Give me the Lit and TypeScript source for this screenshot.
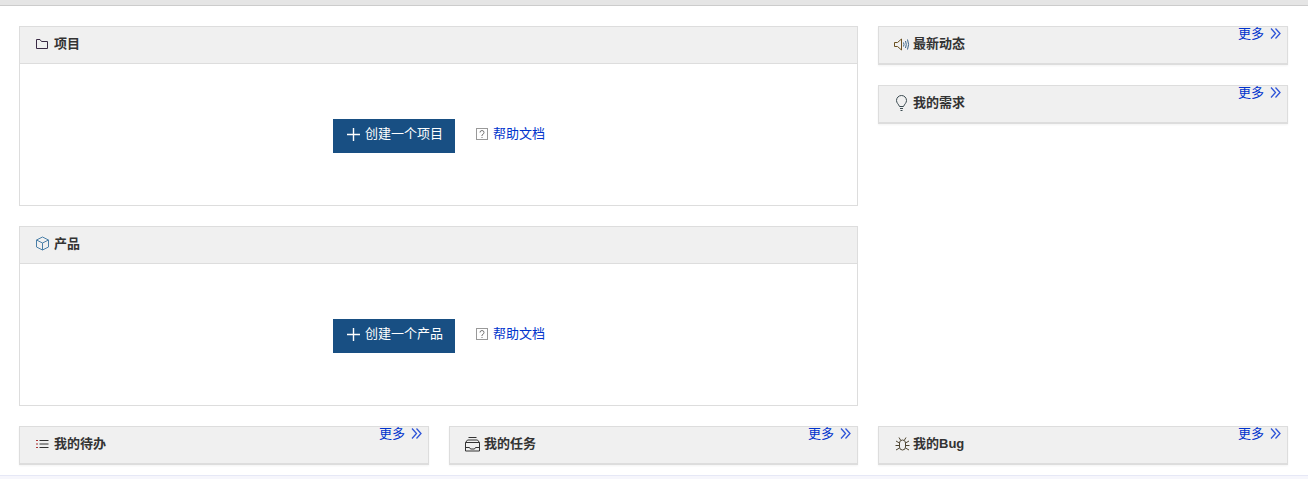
import { LitElement, html, css, svg } from "lit";
import { customElement } from "lit/decorators.js";

const ic = (w: number, h: number, body: unknown, cls = "ic") =>
  html`<svg class=${cls} width=${w} height=${h} viewBox="0 0 ${w} ${h}" fill="none" stroke="currentColor" stroke-width="1">${body}</svg>`;

const folder = ic(13, 12, svg`<path d="M1.500 10.500V1.500h3.500l1.500 2h6v7z" stroke="#3a2a45"/>`);
const box = ic(15, 15, svg`<path d="M7.500 1 13.500 4v7l-6 3-6-3V4zM1.500 4l6 3 6-3M7.500 7v7" stroke="#4a7fa8"/>`);
const speaker = ic(16, 13, svg`<path d="M.5 4.500h3l4-3.500v11l-4-3.500h-3z" stroke="#6a5020"/><path d="M9.500 4.500q1 2 0 4M11.500 3q1.600 3.500 0 7M13.500 1.500q2.200 5 0 10" stroke="#3a6488"/>`);
const bulb = ic(14, 16, svg`<path d="M5.500 11.500C4.500 9 2.500 8 2.500 5.500a5 5 0 0 1 10 0c0 2.500-2 3.500-3 6zM6 13.500h3M6.500 15.500h2" stroke="#3a4a50"/>`);
const list = ic(14, 10, svg`<path d="M4.500 1.500h9M4.500 5h9M4.500 8.500h9" stroke="#333"/><path d="M1 1.500h2M1 5h2M1 8.500h2" stroke="#a33"/>`);
const inbox = ic(15, 15, svg`<path d="M3.500.5h8M2.500 3h10M.5 5.500h14v8.500H.5zM.5 10.500h4l1 1.500h4l1-1.500h4M.5 5.500 2.500 3M14.500 5.500 12.500 3" stroke="#333"/>`);
const bug = ic(16, 14, svg`<path d="M5.500 6q0-3 3-3t3 3v4q0 3-3 3t-3-3zM6.500 3 5 .5M10.500 3 12 .5M5.500 6 2 4M11.500 6 15 4M5.500 8.500h-4M11.500 8.500h4M5.500 11 2 13M11.500 11l3.500 2" stroke="#4f4632"/>`);
const chevrons = ic(11, 11, svg`<path d="M1 .5 5.500 5.500 1 10.500M5.500 .5 10 5.500 5.500 10.500" stroke="#2f55d8" stroke-width="1.300"/>`, "chev");
const plus = ic(13, 13, svg`<path d="M6.500 0v13M0 6.500h13" stroke="#fff" stroke-width="1.400"/>`);
const help = ic(12, 12, svg`<rect x=".5" y=".5" width="11" height="11" stroke="#999"/><path d="M4 4.500q0-2 2-2t2 2q0 1.500-2 2.500v1M6 9v1" stroke="#777"/>`);

const heading = css`
  .icon { width: 19px; flex: none; display: flex; align-items: center; margin-bottom: 3px; }
  .title { margin-bottom: 6px; }
`;

@customElement("mini-panel")
export class MiniPanel extends LitElement {
  static properties = { heading: {} };
  heading = "";
  static styles = [heading, css`
    :host { display: block; min-width: 0; }
    .panel {
      position: relative; height: 39px; box-sizing: border-box;
      display: flex; align-items: center; padding: 1px 0 0 15px;
      background: #f0f0f0; border: 1px solid #ddd; border-bottom-width: 2px;
      box-shadow: 0 1px 2px rgba(0, 0, 0, 0.05);
      color: #333; font: bold 13px "Liberation Sans", "Noto Sans CJK SC", sans-serif;
    }
    .more {
      position: absolute; top: -2px; right: 6px; display: flex; align-items: center; gap: 6px;
      color: #0033cc; font: 13px/15px "Noto Sans CJK SC", sans-serif;
    }
    .more span { margin-bottom: 2px; }
  `];
  render() {
    return html`<div class="panel"><span class="icon"><slot></slot></span><span class="title">${this.heading}</span>
      <span class="more"><span>更多</span>${chevrons}</span></div>`;
  }
}

@customElement("block-panel")
export class BlockPanel extends LitElement {
  static properties = { heading: {}, action: {} };
  heading = "";
  action = "";
  static styles = [heading, css`
    :host { display: block; }
    .panel { height: 180px; box-sizing: border-box; border: 1px solid #ddd; background: #fff; }
    .head {
      height: 37px; box-sizing: border-box; display: flex; align-items: center;
      padding: 0 0 0 15px; background: #f0f0f0; border-bottom: 1px solid #ddd;
      color: #333; font: bold 13px "Noto Sans CJK SC", sans-serif;
    }
    .body { display: flex; align-items: center; padding: 55px 0 0 313px; }
    .btn {
      width: 122px; height: 34px; box-sizing: border-box; display: flex; align-items: center;
      gap: 5px; padding-left: 14px; background: #184f83; color: #fff;
      font: 13px "Noto Sans CJK SC", sans-serif;
    }
    .help {
      display: flex; align-items: center; gap: 5px; margin-left: 21px; margin-bottom: 1px;
      color: #0033cc; font: 13px "Noto Sans CJK SC", sans-serif;
    }
    .label { margin-bottom: 7px; }
    .btn svg { margin-bottom: 4px; }
    .help svg { margin-bottom: 3px; }
  `];
  render() {
    return html`<div class="panel">
      <div class="head"><span class="icon"><slot></slot></span><span class="title">${this.heading}</span></div>
      <div class="body">
        <span class="btn">${plus}<span class="label">${this.action}</span></span>
        <span class="help">${help}<span class="label">帮助文档</span></span>
      </div>
    </div>`;
  }
}

@customElement("app-root")
export class AppRoot extends LitElement {
  static styles = css`
    :host { display: block; height: 479px; background: #fff; overflow: hidden; position: relative; }
    .top { height: 6px; box-sizing: border-box; background: #e5e5e5; border-bottom: 1px solid #ccc; }
    .grid {
      display: grid; grid-template-columns: 410px 409px 410px; gap: 20px;
      padding: 20px 20px 0 19px;
    }
    .wide { grid-column: span 2; display: flex; flex-direction: column; gap: 20px; }
    .side { display: flex; flex-direction: column; gap: 20px; }
    .foot {
      position: absolute; left: 0; right: 0; bottom: 0; height: 3px;
      background: #f6f6fc; border-top: 1px solid #e6e8f6;
    }
  `;
  render() {
    return html`
      <div class="top"></div>
      <div class="grid">
        <div class="wide">
          <block-panel heading="项目" action="创建一个项目">${folder}</block-panel>
          <block-panel heading="产品" action="创建一个产品">${box}</block-panel>
        </div>
        <div class="side">
          <mini-panel heading="最新动态">${speaker}</mini-panel>
          <mini-panel heading="我的需求">${bulb}</mini-panel>
        </div>
        <mini-panel heading="我的待办">${list}</mini-panel>
        <mini-panel heading="我的任务">${inbox}</mini-panel>
        <mini-panel heading="我的Bug">${bug}</mini-panel>
      </div>
      <div class="foot"></div>
    `;
  }
}
